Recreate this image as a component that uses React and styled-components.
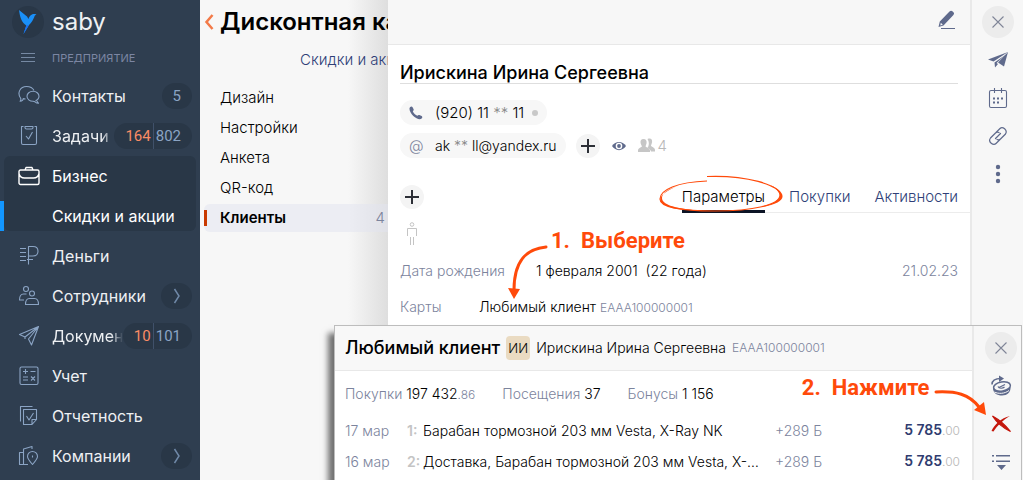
import React, { useState } from 'react';
import styled, { createGlobalStyle } from 'styled-components';

const font = '"Inter", "Liberation Sans", sans-serif';
const navy = '#2f3e50';
const navyDark = '#293747';
const steel = '#8ba4c4';
const slate = '#5f6a8c';
const muted = '#7c849d';
const link = '#2f3f78';
const marker = '#ff4a0a';

const menu = [
	{ id: 'contacts', text: 'Контакты', count: '5' },
	{ id: 'tasks', text: 'Задачи', hot: '164', count: '802' },
	{ id: 'business', text: 'Бизнес', children: ['Скидки и акции'] },
	{ id: 'money', text: 'Деньги' },
	{ id: 'staff', text: 'Сотрудники', more: true },
	{ id: 'docs', text: 'Документы', hot: '10', count: '101' },
	{ id: 'accounting', text: 'Учет' },
	{ id: 'reports', text: 'Отчетность' },
	{ id: 'companies', text: 'Компании', more: true },
];

const sections = [
	{ text: 'Дизайн' },
	{ text: 'Настройки' },
	{ text: 'Анкета' },
	{ text: 'QR-код' },
	{ text: 'Клиенты', count: 4 },
];

const tabs = ['Параметры', 'Покупки', 'Активности'];

const purchases = [
	{ date: '17 мар', number: '1:', title: 'Барабан тормозной 203 мм Vesta, X-Ray NK', bonus: '+289 Б', sum: '5 785', cents: '.00' },
	{ date: '16 мар', number: '2:', title: 'Доставка, Барабан тормозной 203 мм Vesta, X-Ray NK', bonus: '+289 Б', sum: '5 785', cents: '.00' },
];

const menuIcons = {
	contacts: (
		<>
			<path d="M5 13.500c.3 1.500-.7 2.500-3 2.800 1-1 1.200-2 .5-3.300C-1 8 2 1.500 8.500 1.500c4 0 6.300 1.500 7.500 4M5 13.500c.8.300 1.500.5 2.500.5" />
			<path d="M17.500 15.800c2.300-1 3.500-3 3.500-4.500 0-2.800-2.600-5-6-5s-6 2.200-6 5 2.600 5 6 5c1 0 1.500 0 2 .5.900.9 2 1.400 3.500 1.400-1-.8-1.500-1.500-1.500-2.400" />
		</>
	),
	tasks: (
		<>
			<path d="M5.500 1.500H3.500v16.500a1.500 1.500 0 0 0 1.500 1.500h12a1.500 1.500 0 0 0 1.500-1.500V1.500h-2M7 1.500h8v1a1.500 1.500 0 0 1-1.500 1.500h-5A1.500 1.500 0 0 1 7 2.500z" />
			<path d="M8 11l2.500 3 4-7" />
		</>
	),
	business: (
		<path d="M2.500 5h17a1.500 1.500 0 0 1 1.500 1.500V18a1.500 1.500 0 0 1-1.500 1.500h-17A1.500 1.500 0 0 1 1 18V6.500A1.500 1.500 0 0 1 2.500 5zM7 5l1-2.500h6L15 5M1 8.500c1 4.500 3.500 4.500 5.500 4.500h9c2 0 4.500 0 5.500-4.500" strokeWidth="1.400" />
	),
	money: (
		<path d="M2 3.500h6M2 7.500h6M2 11.500h6M2 15.500h6M9 14.500h6M10.500 19.500v-18H15c3.500 0 5 2.200 5 4.700s-1.500 4.800-5 4.800h-4.500" />
	),
	staff: (
		<>
			<circle cx="8" cy="4" r="2.500" />
			<circle cx="14" cy="8.500" r="2.500" />
			<path d="M8.500 9H5.500C3 9 1.500 11 1.500 15H6M7.500 19.500c0-3.500 1.500-6 4-6h5c2.500 0 4 2.500 4 6z" />
		</>
	),
	docs: (
		<path d="M7 12L1.500 9.500 20.500 1.500 13.500 20 10.500 14 20.500 1.500 7 12v2" />
	),
	accounting: (
		<>
			<rect x="2" y="2" width="18" height="17.500" rx="1.500" />
			<path d="M5 6.500h5M7.500 4v5M12.500 6.500h5M5 12h5M5 15h5M13 11.500l4 4M17 11.500l-4 4" />
		</>
	),
	reports: (
		<path d="M14.500 1.500h-12v15M5.500 4.500h13v10l-4.500 5H5.500zM14 19.500v-5h4.500M8.500 11l2.500 4 4.500-7" />
	),
	companies: (
		<path d="M5.500 19.500h-4v-12h4M10 19.500H5.500V4L14 1.500V4M14.500 19.500c-3.500-4-5-6-5-8a5 5 0 0 1 10 0c0 2-1.500 4-5 8zM14.500 10.500v2" />
	),
};

const MenuIcon = ({ id }) => (
	<svg width="22" height="22" viewBox="0 0 22 22" fill="none" stroke="currentColor" strokeWidth="1.1" strokeLinejoin="round" aria-hidden="true">
		{menuIcons[id]}
	</svg>
);

const Chevron = () => (
	<svg width="8" height="16" viewBox="0 0 8 16" fill="none" stroke="currentColor" strokeWidth="1.500" aria-hidden="true">
		<path d="M1.500 1L6 8l-4.500 7" />
	</svg>
);

const CloseIcon = () => (
	<svg width="12" height="12" viewBox="0 0 12 12" stroke="#7f8597" strokeWidth="1.100" aria-hidden="true">
		<path d="M.5.5l11 11M11.500.5l-11 11" />
	</svg>
);

const PlusIcon = () => (
	<svg width="14" height="14" viewBox="0 0 14 14" stroke="#2c2f36" strokeWidth="2" aria-hidden="true">
		<path d="M7 0v14M0 7h14" />
	</svg>
);

const Menu = () => (
	<Sidebar>
		<Brand>
			<LogoCircle>
				<svg width="32" height="32" viewBox="0 0 32 32" aria-hidden="true">
					<path d="M7 4l8 6.500 1.500 2.500c.5-2 1.500-3.500 3.500-4.500 1.500-.7 2.500-.5 4.500 0-1.500.5-1.800 1-2.200 2.500C21 14 20 16 17 19l-5.500 9 2.800-8.500C10 16.500 8 12 7 4z" fill="#1a8ff7" />
					<path d="M14.300 19.500L17 19l-5.500 9z" fill="#1a6ff0" />
				</svg>
			</LogoCircle>
			saby
		</Brand>
		<Caption>
			<svg width="22" height="12" viewBox="0 0 22 12" stroke="#7689a3" aria-hidden="true">
				<path d="M3 1.500h14M3 5.500h14M3 9.500h14" />
			</svg>
			ПРЕДПРИЯТИЕ
		</Caption>
		<nav>
			{menu.map(item => (
				<MenuGroup key={item.id} $open={!!item.children}>
					<MenuItem href="#" $open={!!item.children}>
						<MenuIcon id={item.id} />
						<MenuText $fade={!!item.hot}>{item.text}</MenuText>
						{item.count && (
							<Badge>
								{item.hot && <Hot>{item.hot}</Hot>}
								<span>{item.count}</span>
							</Badge>
						)}
						{item.more && <More><Chevron /></More>}
					</MenuItem>
					{item.children && item.children.map(child => (
						<SubItem href="#" key={child}>{child}</SubItem>
					))}
				</MenuGroup>
			))}
		</nav>
	</Sidebar>
);

const DiscountPage = () => (
	<Page>
		<PageHead>
			<BackButton aria-label="Назад">
				<svg width="10" height="16" viewBox="0 0 10 16" fill="none" stroke="#f37a48" strokeWidth="2.500" aria-hidden="true">
					<path d="M8.500 1L2.500 8l6 7" />
				</svg>
			</BackButton>
			<PageTitle>Дисконтная карта</PageTitle>
		</PageHead>
		<PageLink href="#">Скидки и акции</PageLink>
		<SectionList>
			{sections.map(section => (
				<Section href="#" key={section.text} $active={!!section.count}>
					{section.text}
					{section.count && <SectionCount>{section.count}</SectionCount>}
				</Section>
			))}
		</SectionList>
	</Page>
);

const ClientCard = () => {
	const [tab, setTab] = useState(tabs[0]);

	return (
		<Card>
			<CardMain>
				<CardHead>
					<IconButton aria-label="Изменить">
						<svg width="18" height="20" viewBox="0 0 18 20" fill={slate} aria-hidden="true">
							<path d="M1.800 11.500L11.500 1.500a2.200 2.200 0 0 1 3.200 0l.5.500a2.200 2.200 0 0 1 0 3.200L5.500 15.500.5 17z" />
							<path d="M2.800 12.800l2 2-2.500.700z" fill="#f7f7f7" />
							<path d="M3 18h14v1H3z" />
						</svg>
					</IconButton>
				</CardHead>
				<CardBody>
					<ClientName>Ирискина Ирина Сергеевна</ClientName>
					<ContactRow>
						<Chip>
							<svg width="14" height="14" viewBox="0 0 14 14" fill={slate} aria-hidden="true">
								<path d="M1 1.200C2 .2 3 .3 3.600 1.300l1 2c.3.800 0 1.300-.8 2 .9 2 2.500 3.500 4.600 4.500.7-.8 1.300-1 2-.7l2.200 1c.9.600.9 1.500 0 2.400-1.500 1.500-5.300.5-8.300-2.500S-.5 2.700 1 1.200z" />
							</svg>
							<span>(920) 11 <Stars>**</Stars> 11</span>
							<Dot />
						</Chip>
					</ContactRow>
					<ContactRow>
						<Chip>
							<AtSign>@</AtSign>
							<Email>ak <Stars>**</Stars> ll@yandex.ru</Email>
						</Chip>
						<RoundButton aria-label="Добавить контакт"><PlusIcon /></RoundButton>
						<Eye width="14" height="10" viewBox="0 0 14 10" aria-hidden="true">
							<path d="M0 5c3.500-5.500 10.500-5.500 14 0-3.500 5.500-10.500 5.500-14 0z" fill={slate} />
							<circle cx="7" cy="5" r="3.300" fill="#fff" />
							<circle cx="7" cy="5" r="1.900" fill={slate} />
						</Eye>
						<Relatives>
							<svg width="17" height="15" viewBox="0 0 17 15" fill="#c6c6c6" aria-hidden="true">
								<path d="M9.500 1c3.500-1.500 5 .5 4.500 3.500-.3 1.500-1 2.500-1 3.500 1 1 4 1.500 4 4v1.500h-4c-.5-2-2-3-3.500-3.500 1.500-2.500 2-5.500 0-9z" />
								<path d="M5.500 1c2.500 0 3.500 2 3 4.500-.2 1-.8 2-1 3 1 1 4.500 1.500 4.500 4V14H0v-1.500c0-2.500 3-3 4-4-.4-1-1-2-1.300-3C2 3 3 1 5.500 1z" />
							</svg>
							4
						</Relatives>
					</ContactRow>
					<TabRow>
						<RoundButton aria-label="Добавить"><PlusIcon /></RoundButton>
						<Tabs role="tablist">
							{tabs.map(name => (
								<Tab role="tab" key={name} aria-selected={tab === name} $active={tab === name} onClick={() => setTab(name)}>
									{name}
									{name === tabs[0] && (
										<TabOutline width="126" height="42" viewBox="0 0 126 42" fill="none" aria-hidden="true">
											<path d="M49 7C19 8 2 16 2 25c0 8 22 12 55 12 38 0 65-6 65-16C122 11 88 1 49 2.500" stroke={marker} strokeWidth="1.200" />
											<path d="M20 12C4 18-3 26 7 31c6 3 14 5 28 5C18 34 4 31 4 24c0-5 6-9 16-12zM112 11c16 9 13 17-10 22 27-3 29-14 10-22z" fill={marker} />
										</TabOutline>
									)}
								</Tab>
							))}
						</Tabs>
					</TabRow>
					<Person width="12" height="24" viewBox="0 0 12 24" fill="none" stroke="#c4c4c4" aria-hidden="true">
						<circle cx="6" cy="2.500" r="1.800" />
						<path d="M1.500 14V6.500h9V14M4.500 15v8M7.500 15v8" />
					</Person>
					<Field>
						<FieldLabel $wide>Дата рождения</FieldLabel>
						<span>1 февраля 2001&nbsp; (22 года)</span>
						<FieldDate>21.02.23</FieldDate>
					</Field>
					<Field>
						<FieldLabel>Карты</FieldLabel>
						<span>Любимый клиент <Code>EAAA100000001</Code></span>
						<StepOne>
							<svg width="44" height="56" viewBox="0 0 44 56" fill="none" aria-hidden="true">
								<path d="M41 2C20 4 9 17 9 45" stroke={marker} strokeWidth="3" strokeLinecap="round" />
								<path d="M3 43l12 1-6 10z" fill={marker} />
							</svg>
							<Note>1.&nbsp; Выберите</Note>
						</StepOne>
					</Field>
				</CardBody>
			</CardMain>
			<ToolBar>
				<CloseButton aria-label="Закрыть"><CloseIcon /></CloseButton>
				<IconButton aria-label="Отправить">
					<svg width="22" height="18" viewBox="0 0 22 18" fill={slate} aria-hidden="true">
						<path d="M1 8.500L21 1 6.500 10.500z" />
						<path d="M21 1l-4 14.500-6-4z" />
						<path d="M19 3.500L7.500 11.500l.5 5 3-3.500-1.500-1z" />
					</svg>
				</IconButton>
				<IconButton aria-label="Календарь">
					<svg width="20" height="22" viewBox="0 0 20 22" fill="none" stroke={slate} strokeWidth="1.100" aria-hidden="true">
						<rect x="1.500" y="3.500" width="17" height="17" rx="1.500" />
						<path d="M6.500 1v5M13.500 1v5" />
						<path d="M5 11.500h2M9 11.500h2M13 11.500h2M5 15.500h2M9 15.500h2" strokeWidth="2.200" />
					</svg>
				</IconButton>
				<IconButton aria-label="Ссылка">
					<svg width="20" height="20" viewBox="0 0 20 20" fill="none" stroke={slate} strokeWidth="1.200" strokeLinecap="round" aria-hidden="true">
						<path d="M8 6.500l4-4c2.500-2.500 8 1.500 5.500 5.500l-5 5c-1 1-2.500 1-3.500.5M12 13.500l-4 4C5.500 20-.5 16 2.500 12l5-5c1-1 2.500-1 3.500-.5M7.500 12.500l5-5" />
					</svg>
				</IconButton>
				<IconButton aria-label="Ещё">
					<svg width="6" height="20" viewBox="0 0 6 20" fill={slate} aria-hidden="true">
						<circle cx="3" cy="3" r="2.200" />
						<circle cx="3" cy="10" r="2.200" />
						<circle cx="3" cy="17" r="2.200" />
					</svg>
				</IconButton>
			</ToolBar>
		</Card>
	);
};

const LoyaltyWindow = () => (
	<Window>
		<WindowMain>
			<WindowHead>
				<WindowTitle>Любимый клиент</WindowTitle>
				<Avatar>ИИ</Avatar>
				<span>Ирискина Ирина Сергеевна</span>
				<Code>EAAA100000001</Code>
			</WindowHead>
			<Stats>
				<span><Label>Покупки</Label> 197 432<Cents $dark>.86</Cents></span>
				<span><Label>Посещения</Label> 37</span>
				<span><Label>Бонусы</Label> 1 156</span>
			</Stats>
			<Purchases>
				<tbody>
					{purchases.map(row => (
						<tr key={row.date}>
							<DateCell>{row.date}</DateCell>
							<NumberCell>{row.number}</NumberCell>
							<TitleCell>{row.title}</TitleCell>
							<BonusCell>{row.bonus}</BonusCell>
							<SumCell>{row.sum}<Cents>{row.cents}</Cents></SumCell>
						</tr>
					))}
				</tbody>
			</Purchases>
		</WindowMain>
		<WindowTools>
			<CloseButton aria-label="Закрыть"><CloseIcon /></CloseButton>
			<IconButton aria-label="Начислить бонусы">
				<svg width="22" height="22" viewBox="0 0 22 22" fill="none" stroke={slate} aria-hidden="true">
					<path d="M2 9.500C2 5 6 3.500 11 3.500" strokeWidth="1.500" />
					<path d="M9 .5l5 3L9 7z" fill={slate} stroke="none" />
					<path d="M3 13c0 5 4 7.500 9 7.500s9-3.500 8.500-8.500z" fill={slate} stroke="none" />
					<ellipse cx="12" cy="11.500" rx="8.500" ry="4.500" fill="#f7f7f7" strokeWidth="1.500" transform="rotate(-10 12 11.500)" />
					<path d="M8 11.500c1 2.500 5 2 6.500.5M9 12.500l6-3" strokeWidth="1.200" />
					<path d="M4.500 17c3.500 2 10 2 14.500-1.500" stroke="#f7f7f7" />
				</svg>
			</IconButton>
			<IconButton aria-label="Удалить">
				<svg width="22" height="20" viewBox="0 0 22 20" fill="#c4170c" aria-hidden="true">
					<path d="M2.500 2C8 5 15 10.500 20.500 17.500 14 14.500 7 9 2.500 2z" stroke="#c4170c" strokeWidth="1.200" />
					<path d="M20 2C13 6 7 12 3.500 17.500l-2-.5C4 11 11 4 20 2z" />
				</svg>
				<StepTwo>
					<Note>2.&nbsp; Нажмите</Note>
					<svg width="56" height="30" viewBox="0 0 56 30" fill="none" aria-hidden="true">
						<path d="M4 4c20-1 33 2 43 15" stroke={marker} strokeWidth="3" strokeLinecap="round" />
						<path d="M52 14l2 13-12-5z" fill={marker} />
					</svg>
				</StepTwo>
			</IconButton>
			<IconButton aria-label="Показать все">
				<svg width="20" height="16" viewBox="0 0 20 16" fill={slate} aria-hidden="true">
					<path d="M1 1h2v1.500H1zM5 1h14v1.500H5zM1 6.500h2V8H1zM5 6.500h14V8H5zM6 11h9l-4.500 5z" />
				</svg>
			</IconButton>
		</WindowTools>
	</Window>
);

const App = () => (
	<>
		<GlobalStyle />
		<Layout>
			<Menu />
			<DiscountPage />
			<ClientCard />
			<LoyaltyWindow />
		</Layout>
	</>
);

const GlobalStyle = createGlobalStyle`
	* {
		box-sizing: border-box;
	}

	body {
		color: #000;
		font: 300 14px/20px ${font};
		margin: 0;
	}

	a {
		color: inherit;
		text-decoration: none;
	}

	button {
		background: none;
		border: 0;
		color: inherit;
		cursor: pointer;
		font: inherit;
		padding: 0;
	}

	svg {
		display: block;
		flex: none;
	}
`;

const Layout = styled.div`
	display: flex;
	height: 100vh;
	overflow: hidden;
	position: relative;
	white-space: nowrap;
`;

const Sidebar = styled.aside`
	background: ${navy};
	color: #eef0f3;
	flex: none;
	width: 200px;
`;

const Brand = styled.div`
	align-items: center;
	display: flex;
	font-size: 24px;
	font-weight: 400;
	gap: 8px;
	height: 44px;
	padding: 0 12px;
`;

const LogoCircle = styled.span`
	background: ${navyDark};
	border-radius: 50%;
`;

const Caption = styled.div`
	align-items: center;
	color: #7c86a3;
	display: flex;
	font-size: 11px;
	font-weight: 400;
	gap: 12px;
	height: 32px;
	padding: 0 18px 4px;
`;

const MenuGroup = styled.div`
	background: ${props => (props.$open ? navyDark : 'none')};
	border-radius: 6px;
	margin: 0 4px;
`;

const MenuItem = styled.a`
	align-items: center;
	color: ${props => (props.$open ? '#fff' : 'inherit')};
	display: flex;
	font-size: 16px;
	font-weight: 400;
	height: 40px;
	padding: 0 4px 0 14px;

	> svg {
		color: ${props => (props.$open ? '#fff' : steel)};
		margin-right: 12px;
	}
`;

const MenuText = styled.span`
	flex: 1;
	min-width: 0;
	overflow: hidden;
	${props => props.$fade && 'mask-image: linear-gradient(to left, transparent, #000 12px);'}
`;

const Badge = styled.span`
	background: ${navyDark};
	border-radius: 13px;
	color: ${steel};
	display: flex;
	font: 400 15px/26px "Roboto", sans-serif;
	padding: 0 11px;
`;

const Hot = styled.span`
	border-right: 1px solid #40516a;
	color: #f98c65;
	margin-right: 2px;
	padding-right: 2px;
`;

const More = styled.span`
	align-items: center;
	background: ${navyDark};
	border-radius: 13px;
	color: #7089a8;
	display: flex;
	height: 26px;
	justify-content: center;
	width: 31px;
`;

const SubItem = styled.a`
	align-items: center;
	border-left: 4px solid #1296ff;
	color: #fff;
	display: flex;
	font-size: 16px;
	font-weight: 400;
	height: 30px;
	margin: 5px 0 0 -4px;
	padding-left: 48px;

	${MenuGroup} > & {
		margin-bottom: 5px;
	}
`;

const Page = styled.main`
	background: linear-gradient(to left, #dedede, #f7f7f7 40px);
	flex: none;
	overflow: hidden;
	width: 188px;
`;

const PageHead = styled.header`
	align-items: center;
	display: flex;
	gap: 6px;
	height: 44px;
	padding-left: 4px;
`;

const BackButton = styled.button`
	flex: none;
`;

const PageTitle = styled.h1`
	font-size: 24px;
	font-weight: 600;
	line-height: 28px;
	margin: 0;
`;

const PageLink = styled.a`
	color: ${link};
	display: block;
	font-size: 15px;
	line-height: 32px;
	padding-left: 100px;
`;

const SectionList = styled.nav`
	display: grid;
	gap: 2px;
	padding: 8px 0 0 4px;
`;

const Section = styled.a`
	align-items: center;
	background: ${props => (props.$active ? 'rgba(226, 228, 240, .5)' : 'none')};
	border-radius: 6px 0 0 6px;
	display: flex;
	font-size: 15px;
	font-weight: ${props => (props.$active ? 600 : 'inherit')};
	height: 28px;
	padding-right: 3px;

	&::before {
		background: ${props => (props.$active ? '#c93a00' : 'none')};
		content: '';
		height: 16px;
		margin-right: 13px;
		width: 3px;
	}
`;

const SectionCount = styled.span`
	color: ${muted};
	flex: 1;
	font-weight: 300;
	text-align: right;
`;

const Card = styled.section`
	background: #fff;
	display: flex;
	flex: 1;
	min-width: 0;
`;

const CardMain = styled.div`
	flex: 1;
	min-width: 0;
`;

const CardHead = styled.header`
	align-items: center;
	background: #f7f7f7;
	border-bottom: 1px solid #e8e8e8;
	display: flex;
	height: 45px;
	justify-content: flex-end;
	padding: 0 14px 4px 0;
`;

const IconButton = styled.button`
	align-items: center;
	display: flex;
	justify-content: center;
	position: relative;
`;

const CardBody = styled.div`
	display: flex;
	flex-direction: column;
	font-size: 15px;
	padding: 18px 12px 0;
`;

const ClientName = styled.h2`
	border-bottom: 1px solid #dedede;
	font-size: 18px;
	font-weight: 500;
	line-height: 20px;
	margin: 0 0 16px;
`;

const ContactRow = styled.div`
	align-items: center;
	display: flex;
	margin-bottom: 8px;
`;

const Chip = styled.span`
	align-items: center;
	background: #f7f7f7;
	border-radius: 13px;
	display: flex;
	gap: 8px;
	height: 25px;
	margin-right: 10px;
	padding: 0 9px;

	> :first-child {
		margin-right: 4px;
	}
`;

const AtSign = styled.span`
	color: ${muted};
	width: 14px;
`;

const Email = styled.span`
	font-size: 14px;
`;

const Stars = styled.span`
	color: #888;
`;

const Dot = styled.i`
	background: #c8c8c8;
	border-radius: 50%;
	height: 6px;
	width: 6px;
`;

const RoundButton = styled.button`
	align-items: center;
	background: #f4f4f4;
	border-radius: 50%;
	display: flex;
	height: 24px;
	justify-content: center;
	width: 24px;
`;

const Eye = styled.svg`
	margin: 0 12px;
`;

const Relatives = styled.span`
	align-items: center;
	color: #b8b8b8;
	display: flex;
	gap: 3px;
`;

const TabRow = styled.div`
	align-items: center;
	display: flex;
	height: 32px;
	justify-content: space-between;
	margin: 15px 0 9px;
`;

const Tabs = styled.div`
	border-bottom: 1px solid #ececec;
	display: flex;
	gap: 24px;
	margin-right: -12px;
	padding-right: 12px;
`;

const Tab = styled.button`
	border-bottom: 3px solid ${props => (props.$active ? '#0c1425' : 'transparent')};
	color: ${props => (props.$active ? '#000' : link)};
	line-height: 26px;
	margin-bottom: -1px;
	padding-top: 2px;
	position: relative;
`;

const TabOutline = styled.svg`
	left: -24px;
	pointer-events: none;
	position: absolute;
	top: -8px;
`;

const Person = styled.svg`
	margin: 0 6px 7px;
`;

const Field = styled.div`
	align-items: center;
	display: flex;
	font-size: 14px;
	height: 36px;
	position: relative;
`;

const Label = styled.span`
	color: ${muted};
`;

const FieldLabel = styled(Label)`
	width: ${props => (props.$wide ? 136 : 79)}px;
`;

const FieldDate = styled(Label)`
	margin-left: auto;
`;

const Code = styled.span`
	color: ${muted};
	font-size: 12px;
`;

const ToolBar = styled.aside`
	align-items: center;
	background: #f7f7f7;
	border-left: 2px solid #e9e9e9;
	display: grid;
	grid-auto-rows: 38px;
	justify-items: center;
	padding-top: 3px;
	width: 53px;
`;

const CloseButton = styled(IconButton)`
	background: #ececec;
	border-radius: 50%;
	height: 32px;
	width: 32px;
`;

const Window = styled.section`
	background: #fff;
	border: 1px solid #bdbdbd;
	bottom: -8px;
	box-shadow: -6px 8px 6px rgba(0, 0, 0, .55);
	display: flex;
	left: 334px;
	position: absolute;
	right: 1px;
	top: 325px;
`;

const WindowMain = styled.div`
	flex: 1;
	min-width: 0;
`;

const WindowHead = styled.header`
	align-items: center;
	background: #f8f8f8;
	border-bottom: 1px solid #e8e8e8;
	display: flex;
	gap: 6px;
	height: 45px;
	padding: 0 10px;
`;

const WindowTitle = styled.h2`
	font-size: 18px;
	font-weight: 500;
	margin: 0;
`;

const Avatar = styled.span`
	background: #eadbc2;
	border-radius: 4px;
	font-size: 13px;
	line-height: 24px;
	text-align: center;
	width: 24px;
`;

const Stats = styled.div`
	display: flex;
	gap: 27px;
	line-height: 20px;
	padding: 13px 10px 10px;
`;

const Cents = styled.span`
	color: ${props => (props.$dark ? muted : '#b8b8b8')};
	font-size: 12px;
	font-weight: 300;
`;

const Purchases = styled.table`
	border-collapse: collapse;
	table-layout: fixed;
	width: 100%;
`;

const Cell = styled.td`
	height: 31px;
	padding: 0;
`;

const DateCell = styled(Cell)`
	color: ${muted};
	padding-left: 10px;
	width: 72px;
`;

const NumberCell = styled(Cell)`
	color: #c4c4c4;
	font-weight: 600;
	width: 16px;
`;

const TitleCell = styled(Cell)`
	overflow: hidden;
	text-overflow: ellipsis;
`;

const BonusCell = styled(Cell)`
	color: ${muted};
	padding-left: 10px;
	width: 77px;
`;

const SumCell = styled(Cell)`
	color: #2f3c70;
	font-weight: 600;
	padding-right: 12px;
	text-align: right;
	width: 130px;
`;

const WindowTools = styled(ToolBar)`
	padding-left: 6px;
	width: 49px;
`;

const Note = styled.strong`
	color: ${marker};
	font: 700 22px/32px "Roboto", sans-serif;
`;

const StepOne = styled.div`
	display: flex;
	gap: 2px;
	left: 105px;
	pointer-events: none;
	position: absolute;
	top: -44px;

	${Note} {
		margin-top: -20px;
	}
`;

const StepTwo = styled.span`
	display: flex;
	gap: 2px;
	position: absolute;
	right: 24px;
	top: -42px;

	svg {
		margin-top: 16px;
	}
`;

export default App;
